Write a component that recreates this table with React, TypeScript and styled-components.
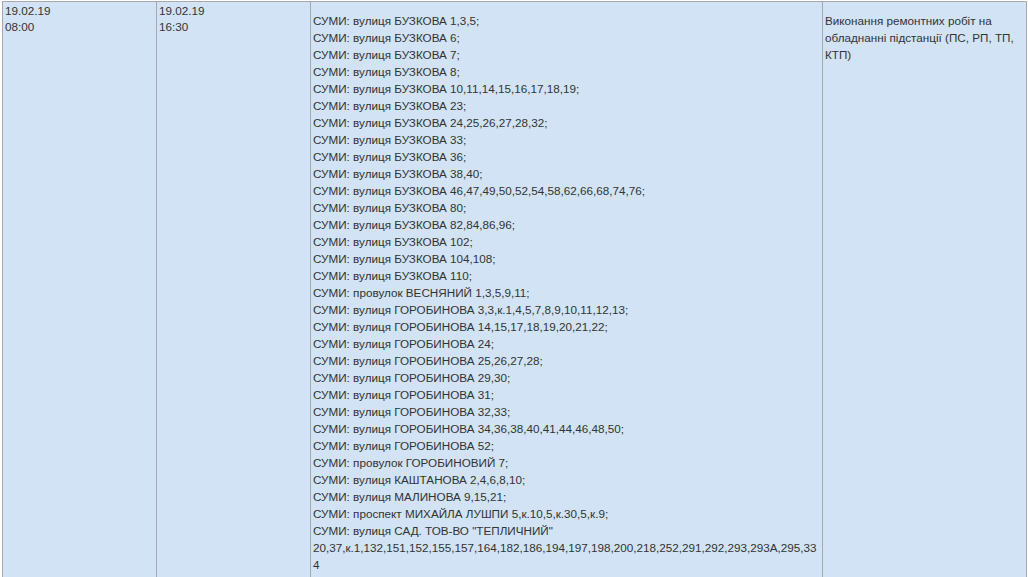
import React from "react";
import styled, { createGlobalStyle } from "styled-components";

const Global = createGlobalStyle`
  html, body { margin: 0; padding: 0; background: #ffffff; }
  body { font-family: "Liberation Sans", Arial, sans-serif; }
`;

const Page = styled.div`
  padding: 1px 0 0 2px;
`;

const Table = styled.table`
  border-collapse: collapse;
  table-layout: fixed;
  width: 1025px;
  background: #d1e3f4;
  font-family: "Liberation Sans", Arial, sans-serif;
  font-size: 11.7px;
  color: #333333;
`;

const Col = styled.col<{ $w: number }>`
  width: ${(p) => p.$w}px;
`;

const Cell = styled.td<{ $padTop: number; $lh: number }>`
  border: 1px solid #a9a9a9;
  vertical-align: top;
  padding: ${(p) => p.$padTop}px 4px 20px 2px;
  line-height: ${(p) => p.$lh}px;
  overflow-wrap: break-word;
`;

const Line = styled.div`
  white-space: nowrap;
`;

const addresses = [
  "СУМИ: вулиця БУЗКОВА 1,3,5;",
  "СУМИ: вулиця БУЗКОВА 6;",
  "СУМИ: вулиця БУЗКОВА 7;",
  "СУМИ: вулиця БУЗКОВА 8;",
  "СУМИ: вулиця БУЗКОВА 10,11,14,15,16,17,18,19;",
  "СУМИ: вулиця БУЗКОВА 23;",
  "СУМИ: вулиця БУЗКОВА 24,25,26,27,28,32;",
  "СУМИ: вулиця БУЗКОВА 33;",
  "СУМИ: вулиця БУЗКОВА 36;",
  "СУМИ: вулиця БУЗКОВА 38,40;",
  "СУМИ: вулиця БУЗКОВА 46,47,49,50,52,54,58,62,66,68,74,76;",
  "СУМИ: вулиця БУЗКОВА 80;",
  "СУМИ: вулиця БУЗКОВА 82,84,86,96;",
  "СУМИ: вулиця БУЗКОВА 102;",
  "СУМИ: вулиця БУЗКОВА 104,108;",
  "СУМИ: вулиця БУЗКОВА 110;",
  "СУМИ: провулок ВЕСНЯНИЙ 1,3,5,9,11;",
  "СУМИ: вулиця ГОРОБИНОВА 3,3,к.1,4,5,7,8,9,10,11,12,13;",
  "СУМИ: вулиця ГОРОБИНОВА 14,15,17,18,19,20,21,22;",
  "СУМИ: вулиця ГОРОБИНОВА 24;",
  "СУМИ: вулиця ГОРОБИНОВА 25,26,27,28;",
  "СУМИ: вулиця ГОРОБИНОВА 29,30;",
  "СУМИ: вулиця ГОРОБИНОВА 31;",
  "СУМИ: вулиця ГОРОБИНОВА 32,33;",
  "СУМИ: вулиця ГОРОБИНОВА 34,36,38,40,41,44,46,48,50;",
  "СУМИ: вулиця ГОРОБИНОВА 52;",
  "СУМИ: провулок ГОРОБИНОВИЙ 7;",
  "СУМИ: вулиця КАШТАНОВА 2,4,6,8,10;",
  "СУМИ: вулиця МАЛИНОВА 9,15,21;",
  "СУМИ: проспект МИХАЙЛА ЛУШПИ 5,к.10,5,к.30,5,к.9;",
  "СУМИ: вулиця САД. ТОВ-ВО \"ТЕПЛИЧНИЙ\"",
  "20,37,к.1,132,151,152,155,157,164,182,186,194,197,198,200,218,252,291,292,293,293А,295,33",
  "4",
];

export default function App() {
  return (
    <>
      <Global />
      <Page>
        <Table>
          <colgroup>
            <Col $w={154} />
            <Col $w={154} />
            <Col $w={512} />
            <Col $w={204} />
          </colgroup>
          <tbody>
            <tr>
              <Cell $padTop={1} $lh={16}>
                19.02.19
                <br />
                08:00
              </Cell>
              <Cell $padTop={1} $lh={16}>
                19.02.19
                <br />
                16:30
              </Cell>
              <Cell $padTop={10} $lh={17}>
                {addresses.map((a, i) => (
                  <Line key={i}>{a}</Line>
                ))}
              </Cell>
              <Cell $padTop={10} $lh={17}>
                Виконання ремонтних робіт на обладнанні підстанції (ПС, РП, ТП, КТП)
              </Cell>
            </tr>
          </tbody>
        </Table>
      </Page>
    </>
  );
}
